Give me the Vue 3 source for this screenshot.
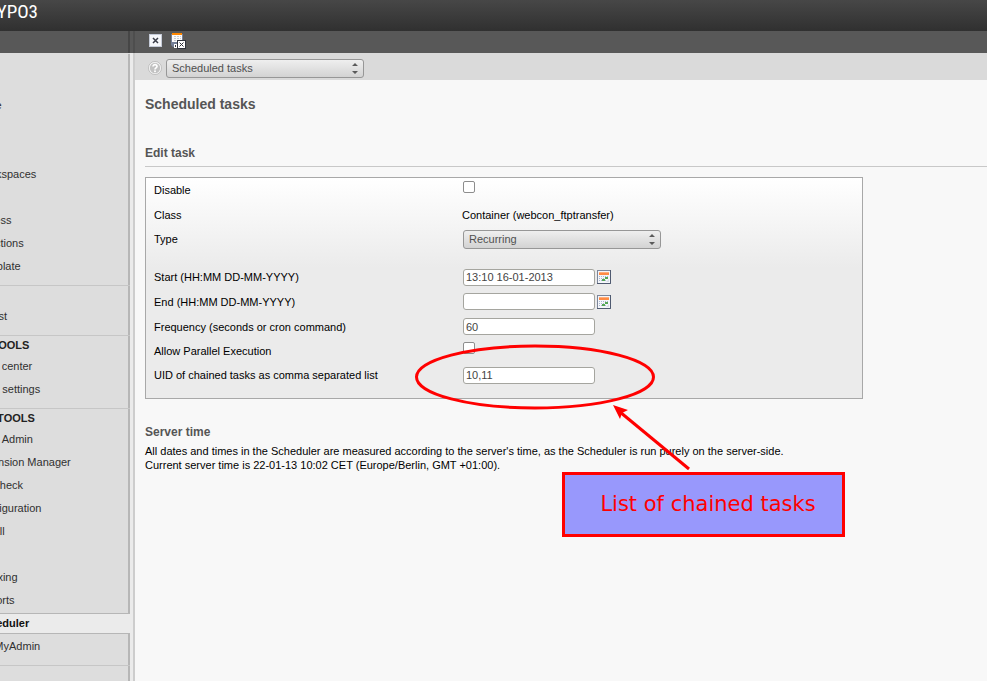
<script setup>
import { ref } from 'vue'

const groups = [
  {
    items: [
      { text: 'Page' },
      { text: 'Workspaces', gap: 2 },
      { text: 'Access', gap: 1 },
      { text: 'Functions' },
      { text: 'Template' },
    ],
  },
  { items: [{ text: 'Filelist' }] },
  { title: 'USER TOOLS', items: [{ text: 'Task center' }, { text: 'User settings' }] },
  {
    title: 'ADMIN TOOLS',
    items: [
      { text: 'User Admin' },
      { text: 'Extension Manager' },
      { text: 'DB check' },
      { text: 'Configuration' },
      { text: 'Install' },
      { text: 'Indexing', gap: 1 },
      { text: 'Reports' },
      { text: 'Scheduler', active: true },
      { text: 'phpMyAdmin' },
    ],
  },
]

const view = ref('Scheduled tasks')
const type = ref('Recurring')
const disabled = ref(false)
const parallel = ref(false)
const start = ref('13:10 16-01-2013')
const end = ref('')
const frequency = ref('60')
const chained = ref('10,11')
</script>

<template>
  <div class="page">
    <header class="topbar"><span class="logo">TYPO3</span></header>
    <div class="docbar">
      <div class="docbar-side"></div>
      <div class="docbar-gutter"></div>
      <div class="docbar-tools">
        <button class="icon-button" aria-label="Close">
          <svg width="13" height="14" viewBox="0 0 13 14">
            <rect x=".5" y=".5" width="12" height="12" fill="#f6f7fa" stroke="#c5cbd8" />
            <path d="M4 4l5 5M9 4L4 9" stroke="#3a3d47" stroke-width="1.5" />
          </svg>
        </button>
        <button class="icon-button" aria-label="Save and close">
          <svg width="16" height="16" viewBox="0 0 16 16">
            <path d="M1 1h12v13H3l-2-2z" fill="#747f96" />
            <path d="M2 0h10v2H2z" fill="#ff8700" />
            <path d="M2 2h10v7H2z" fill="#fafafa" />
            <path d="M4 3.5h7M4 5.5h7M4 7.5h4" stroke="#c6cad2" stroke-dasharray="2 1" />
            <path d="M4 11h4v4H4z" fill="#fff" />
            <path d="M5 12h1v2H5z" fill="#333" />
            <rect x="7.500" y="7.500" width="8" height="8" fill="#fff" stroke="#30333c" />
            <path d="M9.500 9.500l4 4M13.500 9.500l-4 4" stroke="#30333c" />
          </svg>
        </button>
      </div>
    </div>

    <div class="body">
      <nav class="sidebar">
        <section v-for="(group, g) in groups" :key="g" class="group" :class="{ titled: group.title, first: g === 0 }">
          <h2 v-if="group.title" class="group-title">{{ group.title }}</h2>
          <a
            v-for="item in group.items"
            :key="item.text"
            href="#"
            class="item"
            :class="{ active: item.active, 'gap-one': item.gap === 1, 'gap-two': item.gap === 2 }"
            @click.prevent
          >{{ item.text }}</a>
        </section>
        <div class="sidebar-rest"></div>
      </nav>
      <div class="gutter"></div>

      <main class="content">
        <div class="viewbar">
          <svg class="help" width="14" height="14" viewBox="0 0 14 14" aria-hidden="true">
            <circle cx="7" cy="7" r="6.500" fill="#fafafa" stroke="#b4b4b4" stroke-width=".8" />
            <circle cx="7" cy="7" r="5.200" fill="#c2c2c2" />
            <path d="M5 5.600C5 3 9.200 3.200 9 5.500C8.900 6.900 7 6.800 7 8.400" fill="none" stroke="#fff" stroke-width="1.700" />
            <circle cx="7" cy="10.300" r="1" fill="#fff" />
          </svg>
          <div class="select">
            <select v-model="view" aria-label="View"><option>Scheduled tasks</option></select>
            <svg class="arrows" width="6" height="12" viewBox="0 0 6 12"><path d="M0 4l3-3 3 3zM0 9l3 3 3-3z" fill="#5a5a5a" /></svg>
          </div>
        </div>

        <div class="module">
          <h1>Scheduled tasks</h1>
          <h2 class="ruled">Edit task</h2>

          <form class="task" @submit.prevent>
            <label for="disable">Disable</label>
            <div class="field"><input id="disable" v-model="disabled" type="checkbox"></div>

            <span>Class</span>
            <div class="field plain">Container (webcon_ftptransfer)</div>

            <label for="type">Type</label>
            <div class="field">
              <div class="select">
                <select id="type" v-model="type"><option>Recurring</option></select>
                <svg class="arrows" width="6" height="12" viewBox="0 0 6 12"><path d="M0 4l3-3 3 3zM0 9l3 3 3-3z" fill="#5a5a5a" /></svg>
              </div>
            </div>

            <div class="spacer"></div>

            <label for="start">Start (HH:MM DD-MM-YYYY)</label>
            <div class="field">
              <input id="start" v-model="start" type="text">
              <button type="button" class="icon-button" aria-label="Pick start date">
                <svg width="14" height="14" viewBox="0 0 14 14">
                  <rect x=".5" y=".5" width="13" height="13" fill="#f4f6fa" stroke="#7d879b" />
                  <path d="M13.500 0v13.500H0" fill="none" stroke="#4f5a70" />
                  <path d="M2 2h10v3H2z" fill="#ff8b45" />
                  <path d="M2 2h10v1H2z" fill="#ffad7a" />
                  <path d="M2 6.500h10M2 8.500h10M2 10.500h7" stroke="#a9b7cf" stroke-dasharray="1 1" />
                  <path d="M8 7h3v2H8zM5 9h3v2H5z" fill="#55a855" />
                  <path d="M9 12l3-3v3z" fill="#d7dce8" />
                </svg>
              </button>
            </div>

            <label for="end">End (HH:MM DD-MM-YYYY)</label>
            <div class="field">
              <input id="end" v-model="end" type="text">
              <button type="button" class="icon-button" aria-label="Pick end date">
                <svg width="14" height="14" viewBox="0 0 14 14">
                  <rect x=".5" y=".5" width="13" height="13" fill="#f4f6fa" stroke="#7d879b" />
                  <path d="M13.500 0v13.500H0" fill="none" stroke="#4f5a70" />
                  <path d="M2 2h10v3H2z" fill="#ff8b45" />
                  <path d="M2 2h10v1H2z" fill="#ffad7a" />
                  <path d="M2 6.500h10M2 8.500h10M2 10.500h7" stroke="#a9b7cf" stroke-dasharray="1 1" />
                  <path d="M8 7h3v2H8zM5 9h3v2H5z" fill="#55a855" />
                  <path d="M9 12l3-3v3z" fill="#d7dce8" />
                </svg>
              </button>
            </div>

            <label for="frequency">Frequency (seconds or cron command)</label>
            <div class="field"><input id="frequency" v-model="frequency" type="text"></div>

            <label for="parallel">Allow Parallel Execution</label>
            <div class="field"><input id="parallel" v-model="parallel" type="checkbox"></div>

            <label for="chained">UID of chained tasks as comma separated list</label>
            <div class="field"><input id="chained" v-model="chained" type="text"></div>
          </form>

          <h2>Server time</h2>
          <p>
            All dates and times in the Scheduler are measured according to the server's time, as the Scheduler is run purely on the server-side.<br>
            Current server time is 22-01-13 10:02 CET (Europe/Berlin, GMT +01:00).
          </p>
        </div>
      </main>
    </div>

    <svg class="marker" width="300" height="140" viewBox="0 0 300 140" aria-hidden="true">
      <ellipse cx="125" cy="37" rx="118.500" ry="31" fill="none" stroke="#f00" stroke-width="3" />
      <path d="M279 129L210 72" stroke="#f00" stroke-width="3" />
      <path d="M203 65L218 70L212 73L210 79z" fill="#f00" />
    </svg>
    <div class="callout">List of chained tasks</div>
  </div>
</template>

<style>
body {
  margin: 0;
}
</style>

<style scoped>
.page {
  position: relative;
  display: flex;
  flex-direction: column;
  min-height: 100vh;
  overflow: hidden;
  box-sizing: border-box;
  font-family: "Liberation Sans", Arial, sans-serif;
  font-size: 11px;
  line-height: 14px;
  color: #000;
  background: #f8f8f8;
}

.topbar {
  height: 31px;
  background: linear-gradient(#474747, #303030);
  overflow: hidden;
}

.logo {
  display: block;
  width: 38px;
  direction: rtl;
  font-family: "Roboto Condensed", "Open Sans Condensed", "Liberation Sans", sans-serif;
  font-size: 19px;
  line-height: 24px;
  color: #fff;
}

.docbar {
  display: flex;
  height: 22px;
  background: #585858;
}

.docbar-side {
  width: 128px;
}

.docbar-gutter {
  width: 3px;
  border-left: 2px solid #464646;
  border-right: 2px solid #4e4e4e;
}

.docbar-tools {
  display: flex;
  align-items: center;
  gap: 8px;
  padding: 0 14px 2px;
}

.icon-button {
  display: flex;
  padding: 0;
  border: 0;
  background: none;
}

.body {
  display: flex;
  flex: 1;
}

.sidebar {
  display: flex;
  flex-direction: column;
  flex: none;
  width: 130px;
  background: #ddd;
}

.group,
.sidebar-rest {
  border-top: 1px solid #c6c6c6;
  background: linear-gradient(#b6b6b6, #b6b6b6) right / 2px 100% no-repeat;
}

.sidebar-rest {
  flex: 1;
}

.group {
  padding: 19px 0 7px;
}

.group.first {
  border-top-color: transparent;
  padding-top: 40px;
}

.group.titled {
  padding-top: 0;
}

.group-title {
  margin: 0 0 0 -42px;
  font-size: 11px;
  line-height: 19px;
  white-space: nowrap;
  color: #222;
}

.item {
  display: block;
  height: 23px;
  line-height: 23px;
  text-indent: -24px;
  color: #303030;
  text-decoration: none;
  white-space: nowrap;
}

.item.gap-one {
  margin-top: 23px;
}

.item.gap-two {
  margin-top: 46px;
}

.item.active {
  box-sizing: border-box;
  height: 21px;
  margin: 1px 0;
  border-top: 1px solid #b6b6b6;
  border-bottom: 1px solid #b6b6b6;
  line-height: 19px;
  font-weight: bold;
  color: #111;
  background: #ebebeb;
}

.gutter {
  flex: none;
  width: 3px;
  background: #ebebeb;
  border-right: 2px solid #cdcdcd;
}

.content {
  flex: 1;
  min-width: 0;
}

.viewbar {
  display: flex;
  align-items: center;
  gap: 4px;
  box-sizing: border-box;
  height: 27px;
  padding: 3px 0 0 13px;
  background: #dadada;
}

.help {
  flex: none;
}

.select {
  display: grid;
  align-items: center;
  width: 198px;
}

.select select {
  grid-area: 1 / 1;
  appearance: none;
  width: 100%;
  height: 19px;
  padding: 0 20px 0 5px;
  border: 1px solid #979797;
  border-radius: 3px;
  font: inherit;
  color: #505050;
  background: linear-gradient(#efefef, #d3d3d3);
}

.arrows {
  grid-area: 1 / 1;
  justify-self: end;
  margin-right: 6px;
  pointer-events: none;
}

.module {
  padding: 15px 0 0 10px;
}

h1,
h2 {
  margin: 0;
  color: #555;
}

h1 {
  font-size: 14px;
  line-height: 18px;
}

h2 {
  font-size: 12px;
  line-height: 16px;
}

.ruled {
  margin: 32px 0 10px;
  padding-bottom: 5px;
  border-bottom: 1px solid #c8c8c8;
}

.task {
  display: grid;
  grid-template-columns: 308px 1fr;
  grid-template-rows: 24px 25px 24px 14px 24px 25px 25px 24px 24px;
  align-items: center;
  box-sizing: border-box;
  max-width: 718px;
  margin-bottom: 25px;
  padding: 0 8px 11px;
  border: 1px solid #a8a8a8;
  background: linear-gradient(#fff, #ebebeb 90px);
}

.spacer {
  grid-column: 1 / -1;
}

.field {
  display: flex;
  align-items: center;
  gap: 2px;
  padding-left: 1px;
}

.field.plain {
  padding-left: 0;
}

.field input[type="text"] {
  box-sizing: border-box;
  width: 132px;
  height: 17px;
  padding: 0 2px;
  border: 1px solid #a5a59f;
  border-radius: 3px;
  font: inherit;
  color: #444;
  background: #fff;
}

.field input[type="checkbox"] {
  appearance: none;
  width: 12px;
  height: 12px;
  margin: 0 0 6px;
  border: 1px solid #8d8d8d;
  border-radius: 2px;
  background: #fff;
}

p {
  margin: 4px 0 0;
}

.marker {
  position: absolute;
  left: 410px;
  top: 340px;
  pointer-events: none;
}

.callout {
  position: absolute;
  left: 562px;
  top: 472px;
  box-sizing: border-box;
  width: 283px;
  height: 65px;
  padding-left: 9px;
  border: 3px solid #f00;
  font: 21px/59px "DejaVu Sans", sans-serif;
  text-align: center;
  color: #f00;
  background: #9898fc;
}
</style>
